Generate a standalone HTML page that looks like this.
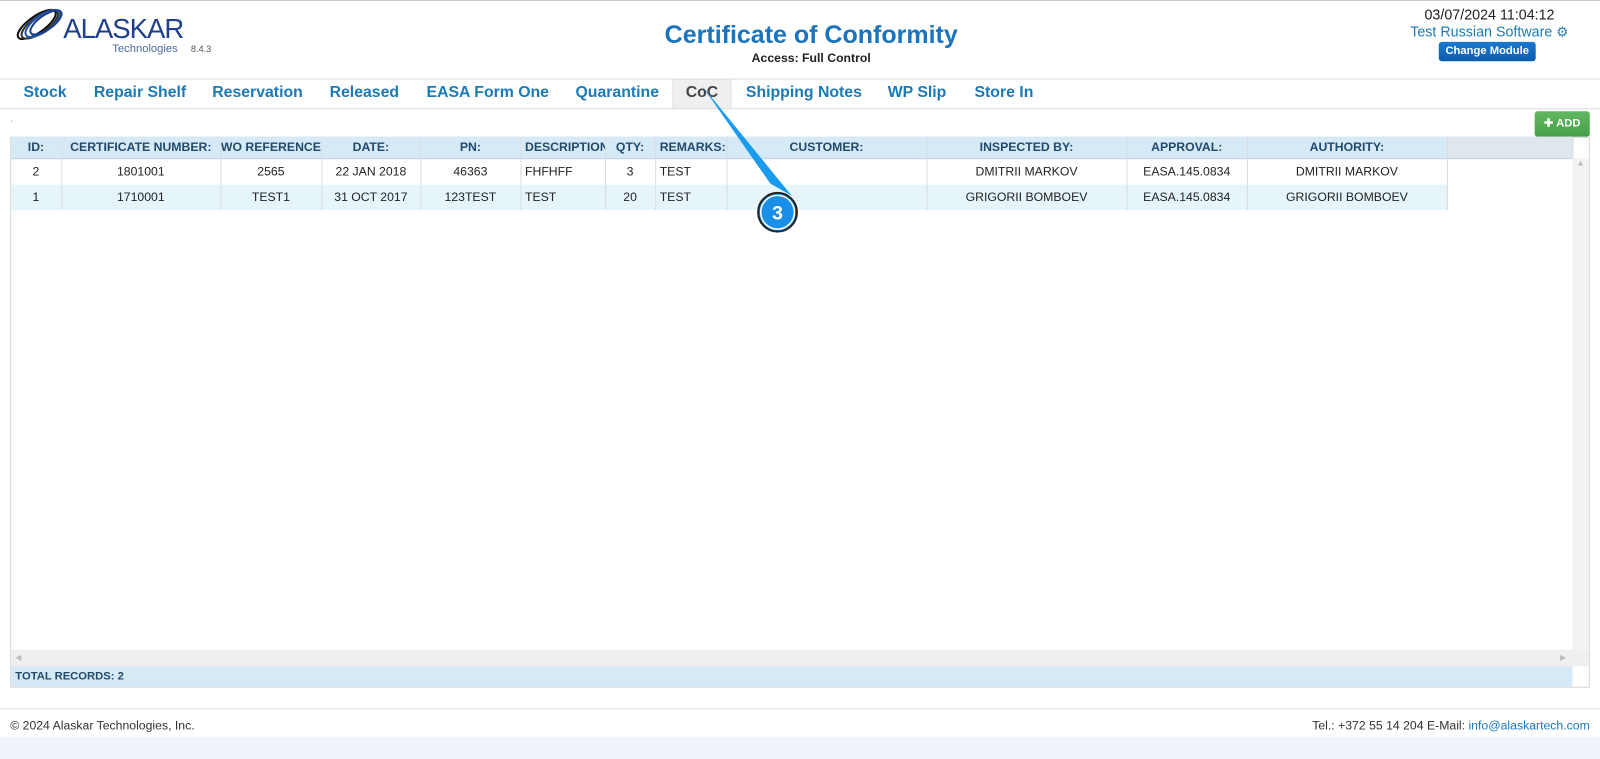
<!DOCTYPE html>
<html><head><meta charset="utf-8"><style>
*{margin:0;padding:0;box-sizing:border-box}
body{width:1600px;height:744px;background:#fff;font-family:"Liberation Sans",Arial,sans-serif;position:relative;overflow:hidden}
#w{position:absolute;left:0;top:0;width:1568px;height:729px;transform:scale(1.0204);transform-origin:0 0}
.abs{position:absolute}
.tab{position:absolute;top:82px;font-size:15.5px;font-weight:bold;color:#1a7ab8}
table{border-collapse:collapse;position:absolute;left:11px;top:134px;font-size:12px;table-layout:fixed;width:1530px}
td,th{height:25.5px;border-right:1px solid #d6dde3;text-align:center;color:#222;white-space:nowrap;overflow:hidden}
th{height:21px;background:#d6e9f7;color:#214a6b;font-weight:bold;font-size:12px;border-bottom:1px solid #b9cfe0}
tr.b td{background:#e6f5fa}
td.l,th.l{text-align:left;padding-left:4px}
</style></head><body><div id="w">
<div class="abs" style="left:0;top:0;width:1568px;height:4px;border-top:1px solid #ccc;"></div>
<svg class="abs" style="left:12px;top:6px" width="60" height="36" viewBox="0 0 60 36">
<g fill="none" stroke-width="2">
<ellipse cx="24" cy="18" rx="22" ry="8" transform="rotate(-35 24 18)" stroke="#111"/>
<ellipse cx="27" cy="18" rx="21" ry="8" transform="rotate(-35 27 18)" stroke="#333"/>
<ellipse cx="30" cy="17" rx="20" ry="8" transform="rotate(-35 30 17)" stroke="#2356a8"/>
<ellipse cx="33" cy="16" rx="18" ry="7" transform="rotate(-35 33 16)" stroke="#1d3f8a"/>
</g></svg>
<div class="abs" style="left:62px;top:13px;font-size:27px;color:#1f3f8c;letter-spacing:-1px">ALASKAR</div>
<div class="abs" style="left:110px;top:42px;font-size:11px;color:#4a6aa0">Technologies</div>
<div class="abs" style="left:187px;top:43px;font-size:9px;color:#555">8.4.3</div>
<div class="abs" style="left:0;width:1590px;top:21px;text-align:center;font-size:24.5px;font-weight:bold;color:#1a74bd">Certificate of Conformity</div>
<div class="abs" style="left:0;width:1590px;top:50px;text-align:center;font-size:12px;font-weight:bold;color:#222">Access: Full Control</div>
<div class="abs" style="left:1396px;top:6px;font-size:14px;color:#222">03/07/2024 11:04:12</div>
<div class="abs" style="left:1382px;top:23px;font-size:14px;color:#1a7ab8">Test Russian Software <span style="font-size:13px">&#9881;</span></div>
<div class="abs" style="left:1410px;top:41px;width:95px;height:19px;background:linear-gradient(#1a78d0,#0c5cb0);border-radius:3px;color:#fff;font-size:11px;font-weight:bold;text-align:center;line-height:19px">Change Module</div>
<div class="abs" style="left:0;top:77px;width:1568px;border-top:1px solid #ddd"></div>
<div class="abs" style="left:659px;top:77px;width:58px;height:30px;background:#efefef;border:1px solid #ddd;border-bottom:none;border-radius:3px 3px 0 0"></div>
<div class="tab" style="left:23px">Stock</div>
<div class="tab" style="left:92px">Repair Shelf</div>
<div class="tab" style="left:208px">Reservation</div>
<div class="tab" style="left:323px">Released</div>
<div class="tab" style="left:418px">EASA Form One</div>
<div class="tab" style="left:564px">Quarantine</div>
<div class="tab" style="left:672px;color:#444">CoC</div>
<div class="tab" style="left:731px">Shipping Notes</div>
<div class="tab" style="left:870px">WP Slip</div>
<div class="tab" style="left:955px">Store In</div>
<div class="abs" style="left:0;top:106px;width:1568px;border-top:1px solid #ddd"></div>
<div class="abs" style="left:10px;top:112px;font-size:8px;color:#666">.</div>
<div class="abs" style="left:1504px;top:109px;width:54px;height:25px;background:linear-gradient(#62b862,#46a046);border-radius:3px;color:#fff;font-size:11px;font-weight:bold;text-align:center;line-height:25px">✚ ADD</div>
<div class="abs" style="left:10px;top:134px;width:1548px;height:540px;border:1px solid #d5d5d5"></div>
<table>
<colgroup><col style="width:49px"><col style="width:156px"><col style="width:99px"><col style="width:97px"><col style="width:98px"><col style="width:83px"><col style="width:49px"><col style="width:70px"><col style="width:196px"><col style="width:196px"><col style="width:118px"><col style="width:196px"><col style="width:123px"></colgroup>
<tr><th>ID:</th><th>CERTIFICATE NUMBER:</th><th>WO REFERENCE</th><th>DATE:</th><th>PN:</th><th class="l">DESCRIPTION</th><th>QTY:</th><th class="l">REMARKS:</th><th>CUSTOMER:</th><th>INSPECTED BY:</th><th>APPROVAL:</th><th>AUTHORITY:</th><th style="background:#dfe6ec"></th></tr>
<tr><td>2</td><td>1801001</td><td>2565</td><td>22 JAN 2018</td><td>46363</td><td class="l">FHFHFF</td><td>3</td><td class="l">TEST</td><td></td><td>DMITRII MARKOV</td><td>EASA.145.0834</td><td>DMITRII MARKOV</td><td style="border:none"></td></tr>
<tr class="b"><td>1</td><td>1710001</td><td>TEST1</td><td>31 OCT 2017</td><td>123TEST</td><td class="l">TEST</td><td>20</td><td class="l">TEST</td><td></td><td>GRIGORII BOMBOEV</td><td>EASA.145.0834</td><td>GRIGORII BOMBOEV</td><td style="border:none;background:#fff"></td></tr>
</table>
<div class="abs" style="left:1541px;top:155px;width:16px;height:482px;background:#f3f3f3;color:#bbb;font-size:8px;text-align:center">▲</div>
<div class="abs" style="left:11px;top:637px;width:1546px;height:16px;background:#efefef;color:#bbb;font-size:8px;line-height:16px;padding:0 4px">◀<span style="float:right;margin-right:18px">▶</span></div>
<div class="abs" style="left:11px;top:653px;width:1530px;height:20px;background:#d6e9f7;color:#214a6b;font-size:11px;font-weight:bold;line-height:20px;padding-left:4px">TOTAL RECORDS: 2</div>
<div class="abs" style="left:0;top:694px;width:1568px;border-top:1px solid #e5e5e5"></div>
<div class="abs" style="left:10px;top:704px;font-size:12px;color:#333">© 2024 Alaskar Technologies, Inc.</div>
<div class="abs" style="right:10px;top:704px;font-size:12px;color:#333">Tel.: +372 55 14 204 E-Mail: <span style="color:#1a7ab8">info@alaskartech.com</span></div>
<div class="abs" style="left:0;top:722px;width:1568px;height:22px;background:#eef4fa"></div>
<svg class="abs" style="left:680px;top:80px" width="110" height="150">
<polygon points="8,4 75,100 96,112" fill="#1a9bf0"/>
<circle cx="82" cy="128" r="19" fill="#1a8fe8" stroke="#222" stroke-width="2"/>
<circle cx="82" cy="128" r="16.5" fill="none" stroke="#fff" stroke-width="1.5"/>
<text x="82" y="135" text-anchor="middle" font-family="Liberation Sans" font-weight="bold" font-size="19" fill="#fff">3</text>
</svg>
</div></body></html>
